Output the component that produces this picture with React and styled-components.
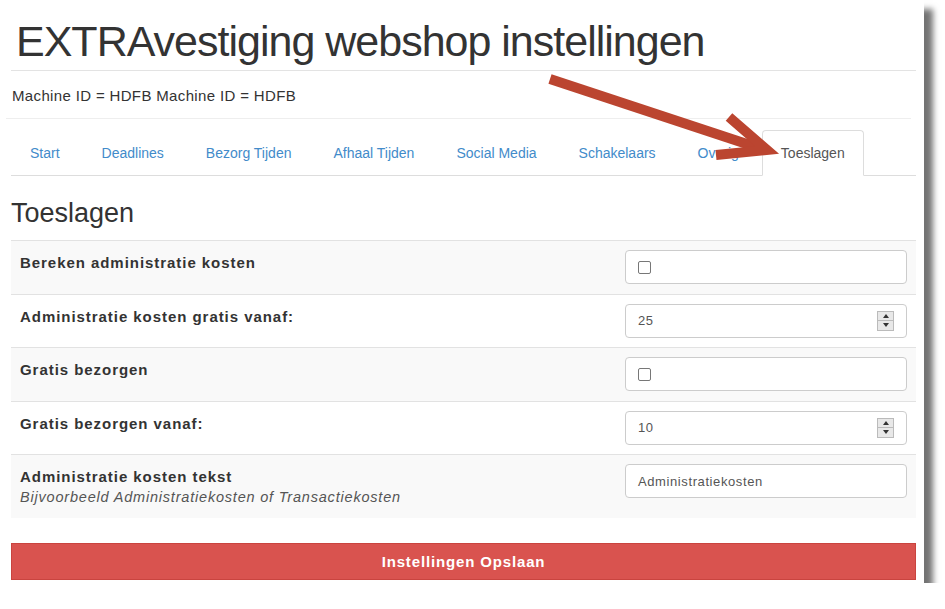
import React from 'react';
import styled, { createGlobalStyle } from 'styled-components';

const GlobalStyle = createGlobalStyle`
  body {
    margin: 0;
    background: #fff;
    font-family: "Liberation Sans", Arial, sans-serif;
    color: #333;
  }
`;

const Card = styled.div`
  position: relative;
  width: 924px;
  height: 583px;
  background: #fff;
  box-shadow: 9px 9px 6px rgba(0, 0, 0, 0.55);
`;

const Content = styled.div`
  padding: 0 8px 0 11px;
`;

const Title = styled.h1`
  margin: 0;
  padding: 17px 0 5px 5px;
  font-size: 43px;
  line-height: 48px;
  letter-spacing: -1px;
  font-weight: 400;
  color: #333;
  border-bottom: 1px solid #e3e3e3;
`;

const Machine = styled.div`
  padding: 15px 0 12px 1px;
  font-size: 15px;
  line-height: 20px;
  letter-spacing: 0.35px;
  color: #333;
`;

const Rule = styled.hr`
  margin: 0 5px 11px -5px;
  border: 0;
  border-top: 1px solid #eee;
`;

const Tabs = styled.ul`
  display: flex;
  margin: 0;
  padding: 0;
  list-style: none;
  border-bottom: 1px solid #ddd;
`;

const Tab = styled.li`
  margin: 0 4px -1px 0;
  padding: 12px 18px;
  font-size: 14px;
  line-height: 20px;
  border: 1px solid ${p => (p.$active ? '#ddd' : 'transparent')};
  border-bottom-color: ${p => (p.$active ? '#fff' : 'transparent')};
  border-radius: 4px 4px 0 0;
  background: ${p => (p.$active ? '#fff' : 'transparent')};
  color: ${p => (p.$active ? '#555' : '#428bca')};
`;

const Heading = styled.h3`
  margin: 22px 0 12px;
  font-size: 27px;
  line-height: 30px;
  font-weight: 400;
  color: #333;
`;

const Table = styled.div`
  display: flex;
  flex-direction: column;
`;

const Row = styled.div`
  display: grid;
  grid-template-columns: 1fr 300px;
  border-top: 1px solid #e2e2e2;
  background: ${p => (p.$striped ? '#f9f9f9' : '#fff')};
`;

const LabelCell = styled.div`
  padding: 12px 9px 11px;
`;

const Label = styled.div`
  font-size: 15px;
  line-height: 20px;
  letter-spacing: 0.95px;
  font-weight: 700;
  color: #333;
`;

const Help = styled.div`
  font-size: 14.5px;
  line-height: 20px;
  letter-spacing: 0.8px;
  font-style: italic;
  color: #555;
`;

const InputCell = styled.div`
  padding: 9px 9px 9.5px 9px;
  display: flex;
  justify-content: flex-end;
`;

const Field = styled.div`
  box-sizing: border-box;
  width: 282px;
  height: 34px;
  display: flex;
  align-items: center;
  justify-content: space-between;
  padding: 0 12px 0 12px;
  border: 1px solid #ccc;
  border-radius: 4px;
  background: #fff;
  font-size: 13px;
  letter-spacing: 0.6px;
  color: #555;
`;

const Check = styled.span`
  box-sizing: border-box;
  width: 13px;
  height: 13px;
  border: 1.5px solid #777;
  border-radius: 2px;
  background: #fff;
`;

const Spinner = styled.span`
  box-sizing: border-box;
  display: flex;
  flex-direction: column;
  width: 17px;
  height: 20px;
  border: 1px solid #bbb;
  background: #e8e8e8;
  & > span {
    flex: 1;
    display: flex;
    align-items: center;
    justify-content: center;
  }
  & > span + span {
    border-top: 1px solid #bbb;
  }
`;

const SaveButton = styled.button`
  display: block;
  width: 100%;
  height: 37px;
  margin-top: 25px;
  border: 1px solid #c9443f;
  background: #d9534f;
  color: #fff;
  font-family: "Liberation Sans", Arial, sans-serif;
  font-size: 15px;
  letter-spacing: 0.85px;
  font-weight: 700;
`;

const ArrowLayer = styled.svg`
  position: absolute;
  left: 0;
  top: 0;
  pointer-events: none;
`;

const tabs = ['Start', 'Deadlines', 'Bezorg Tijden', 'Afhaal Tijden', 'Social Media', 'Schakelaars', 'Overig', 'Toeslagen'];

const Tri = ({ up }) => (
  <svg width="6" height="4" viewBox="0 0 6 4">
    <path d={up ? 'M0 4 L3 0 L6 4 Z' : 'M0 0 L3 4 L6 0 Z'} fill="#333" />
  </svg>
);

const NumberField = ({ value }) => (
  <Field>
    <span>{value}</span>
    <Spinner>
      <span><Tri up /></span>
      <span><Tri /></span>
    </Spinner>
  </Field>
);

const App = () => {
  return (
    <>
      <GlobalStyle />
      <Card>
        <Content>
          <Title>EXTRAvestiging webshop instellingen</Title>
          <Machine>Machine ID = HDFB Machine ID = HDFB</Machine>
          <Rule />
          <Tabs>
            {tabs.map(t => (
              <Tab key={t} $active={t === 'Toeslagen'}>{t}</Tab>
            ))}
          </Tabs>
          <Heading>Toeslagen</Heading>
          <Table>
            <Row $striped>
              <LabelCell><Label>Bereken administratie kosten</Label></LabelCell>
              <InputCell><Field><Check /></Field></InputCell>
            </Row>
            <Row>
              <LabelCell><Label>Administratie kosten gratis vanaf:</Label></LabelCell>
              <InputCell><NumberField value="25" /></InputCell>
            </Row>
            <Row $striped>
              <LabelCell><Label>Gratis bezorgen</Label></LabelCell>
              <InputCell><Field><Check /></Field></InputCell>
            </Row>
            <Row>
              <LabelCell><Label>Gratis bezorgen vanaf:</Label></LabelCell>
              <InputCell><NumberField value="10" /></InputCell>
            </Row>
            <Row $striped>
              <LabelCell>
                <Label>Administratie kosten tekst</Label>
                <Help>Bijvoorbeeld Administratiekosten of Transactiekosten</Help>
              </LabelCell>
              <InputCell><Field>Administratiekosten</Field></InputCell>
            </Row>
          </Table>
          <SaveButton>Instellingen Opslaan</SaveButton>
        </Content>
        <ArrowLayer width="924" height="200" viewBox="0 0 924 200">
          <line x1="550" y1="79" x2="762" y2="149" stroke="#bb4530" strokeWidth="10" />
          <path d="M729 117 L767 150 L716 155" fill="none" stroke="#bb4530" strokeWidth="10" strokeLinejoin="miter" />
        </ArrowLayer>
      </Card>
    </>
  );
};

export default App;
